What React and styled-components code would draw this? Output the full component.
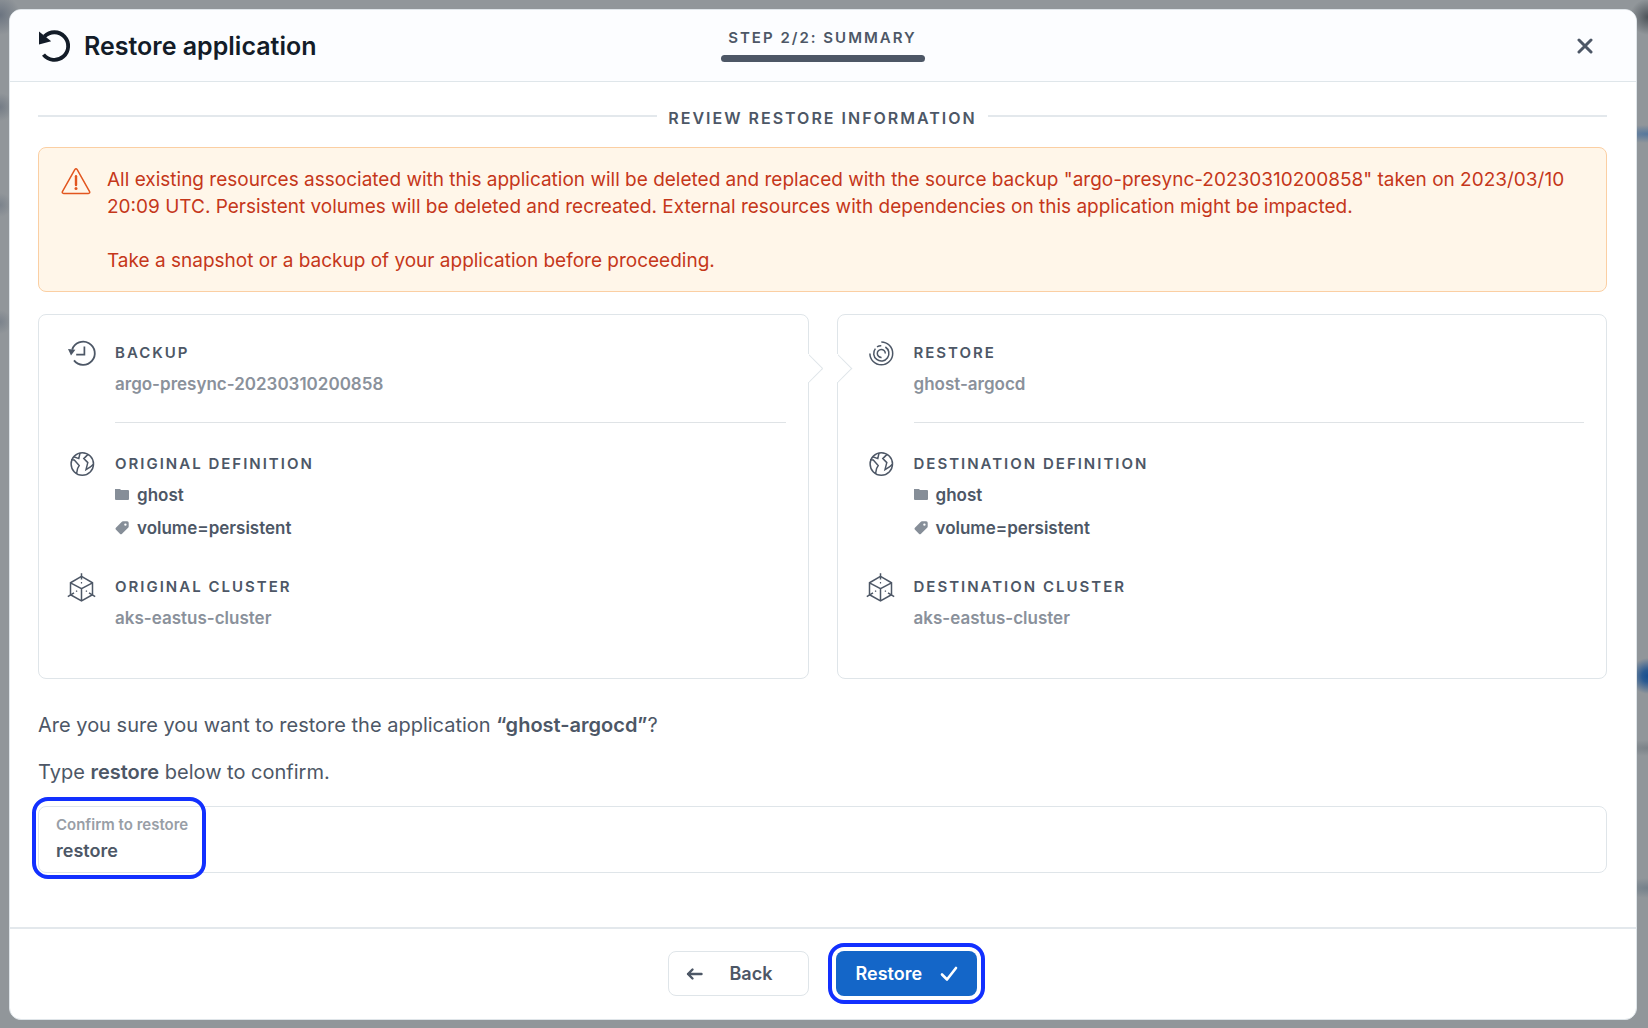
import React, {useState} from 'react';
import styled, {createGlobalStyle} from "styled-components";

const GlobalStyle = createGlobalStyle`
  *, *::before, *::after {
    box-sizing: border-box;
  }

  body {
    margin: 0;
    color: #4d5766;
    font-family: Inter, "Liberation Sans", sans-serif;
    font-size: 20px;
    line-height: 26px;
  }

  h1, h2, h3, p {
    margin: 0;
  }
`;

const Backdrop = styled.div`
  display: flex;
  min-height: 100vh;
  padding: 9px 11px 9px 9px;
  background:
    radial-gradient(circle at 0 15px, #6b7480 0, transparent 20px),
    radial-gradient(circle at 0 107px, #747c86 0, transparent 14px),
    radial-gradient(circle at 0 205px, #7b838c 0, transparent 12px),
    radial-gradient(circle at 0 322px, #7b838c 0, transparent 12px),
    radial-gradient(circle at 100% 17px, #4d5359 0, transparent 18px),
    radial-gradient(ellipse 40px 9px at 100% 134px, #56779c 0, transparent 100%),
    radial-gradient(circle at 100% 676px, #164f90 0, #2a5a92 6px, transparent 18px),
    radial-gradient(ellipse 30px 8px at 100% 748px, #7b8288 0, transparent 100%),
    radial-gradient(ellipse 30px 10px at 100% 888px, #74808a 0, transparent 100%),
    #91969a;
`;

const Modal = styled.main`
  display: flex;
  flex: 1;
  flex-direction: column;
  min-width: 0;
  overflow: hidden;
  background: #fff;
  border: 1px solid #dfe5e9;
  border-radius: 12px;
`;

const Header = styled.header`
  display: grid;
  grid-template-columns: 1fr auto 1fr;
  align-items: center;
  height: 72px;
  padding: 0 29px 0 28px;
  background: #fcfdff;
  border-bottom: 1px solid #dfe6ea;
`;

const Title = styled.h1`
  display: flex;
  align-items: center;
  gap: 9px;
  color: #131c28;
  font-size: 25px;
  font-weight: 600;
  line-height: 36px;
`;

const Step = styled.div`
  width: 204px;
  padding-bottom: 2px;
  font-size: 15px;
  font-weight: 600;
  line-height: 20px;
  letter-spacing: 2px;
  text-align: center;
  text-transform: uppercase;

  &::after {
    display: block;
    height: 7px;
    margin-top: 7px;
    background: #4d5766;
    border-radius: 4px;
    content: "";
  }
`;

const CloseButton = styled.button`
  display: flex;
  align-items: center;
  justify-content: center;
  justify-self: end;
  width: 44px;
  height: 44px;
  padding: 0;
  color: #4d5766;
  background: none;
  border: 0;
  cursor: pointer;
`;

const Body = styled.div`
  flex: 1;
  padding: 24px 29px 54px 28px;
`;

const Heading = styled.h2`
  display: flex;
  align-items: center;
  gap: 11px;
  margin-bottom: 17px;
  font-size: 16px;
  font-weight: 600;
  line-height: 24px;
  letter-spacing: 2px;
  text-transform: uppercase;

  &::before, &::after {
    flex: 1;
    height: 2px;
    margin-bottom: 4px;
    background: #e3e8ec;
    content: "";
  }
`;

const Alert = styled.div`
  display: flex;
  gap: 16px;
  margin-bottom: 22px;
  padding: 18px 22px 17px;
  color: #c5371a;
  font-size: 19px;
  line-height: 27px;
  background: #fff6e9;
  border: 1px solid #fbcfa3;
  border-radius: 8px;

  svg {
    flex: none;
    margin-top: 1px;
  }

  p + p {
    margin-top: 27px;
  }
`;

const Cards = styled.div`
  display: grid;
  grid-template-columns: 1fr 1fr;
  gap: 28px;
  margin-bottom: 33px;
`;

const Card = styled.section`
  position: relative;
  padding: 26px 22px 48px 27px;
  border: 1px solid #dfe5e9;
  border-radius: 8px;

  /* pointer on the edge that leads from one card to the next */
  &::before {
    position: absolute;
    top: 43px;
    ${({$side}) => $side}: -11px;
    width: 21px;
    height: 21px;
    background: linear-gradient(45deg, transparent 45%, #fff 45%);
    border: 1px solid #dfe5e9;
    border-bottom-color: transparent;
    border-left-color: transparent;
    transform: rotate(45deg);
    content: "";
  }

  &::after {
    position: absolute;
    top: 39px;
    ${({$side}) => $side}: -1px;
    width: 1px;
    height: 28px;
    background: #fff;
    content: "";
  }
`;

const Item = styled.div`
  display: flex;
  gap: 17px;

  & + & {
    margin-top: 35px;
  }
`;

const ItemIcon = styled.svg`
  flex: none;
  width: 32px;
  height: 32px;
  margin-top: -4px;
  fill: none;
  stroke: #4d5766;
  stroke-width: 1.5;
`;

const ItemBody = styled.div`
  flex: 1;
  min-width: 0;
  padding-bottom: ${({$divided}) => $divided ? '26px' : '0'};
  margin-bottom: ${({$divided}) => $divided ? '-6px' : '0'};
  border-bottom: ${({$divided}) => $divided ? '1px solid #dfe3e6' : '0'};
`;

const ItemTitle = styled.h3`
  margin-bottom: 7px;
  font-size: 15px;
  font-weight: 600;
  line-height: 24px;
  letter-spacing: 2px;
  text-transform: uppercase;
`;

const ItemValue = styled.p`
  color: #8a919b;
  font-size: 17px;
  font-weight: 600;
  line-height: 24px;
`;

const Tag = styled.p`
  display: flex;
  align-items: center;
  gap: 8px;
  font-size: 17px;
  font-weight: 600;
  line-height: 24px;

  & + & {
    margin-top: 9px;
  }

  svg {
    width: 14px;
    height: 14px;
    fill: #868e98;
  }
`;

const Question = styled.p`
  margin-bottom: 21px;

  b {
    font-weight: 600;
  }
`;

const Field = styled.div`
  position: relative;
  display: flex;
  flex-direction: column;
  padding: 6px 17px 7px;
  border: 1px solid #dfe5e9;
  border-radius: 8px;

  label {
    color: #989ea6;
    font-size: 15px;
    font-weight: 600;
    line-height: 24px;
  }

  input {
    height: 28px;
    padding: 0;
    color: #4d5766;
    font: 600 18px/28px Inter, "Liberation Sans", sans-serif;
    background: none;
    border: 0;
    outline: 0;
  }
`;

const Callout = styled.span`
  position: absolute;
  top: -10px;
  left: -7px;
  width: 174px;
  height: 82px;
  border: 4px solid #1230ff;
  border-radius: 16px;
  pointer-events: none;
`;

const Footer = styled.footer`
  display: flex;
  justify-content: center;
  gap: 27px;
  padding: 22px 30px 23px 28px;
  border-top: 2px solid #e3e8ec;
`;

const Button = styled.button`
  display: flex;
  align-items: center;
  justify-content: ${({$primary}) => $primary ? 'space-between' : 'flex-start'};
  gap: ${({$primary}) => $primary ? '16px' : '27px'};
  width: 141px;
  height: 45px;
  padding: ${({$primary}) => $primary ? '0 19px 0 20px' : '0 17px'};
  color: ${({$primary}) => $primary ? '#fff' : '#4d5766'};
  font: 600 18px/24px Inter, "Liberation Sans", sans-serif;
  background: ${({$primary}) => $primary ? '#1466c8' : '#fff'};
  border: ${({$primary}) => $primary ? '0' : '1px solid #dfe5e9'};
  border-radius: 8px;
  outline: ${({$primary}) => $primary ? '4px solid #1230ff' : '0'};
  outline-offset: 4px;
  cursor: pointer;
`;

const RestoreIcon = () => (
    <svg width="37" height="36" viewBox="0 0 37 36" fill="none">
        <path d="M5.5 26.6A13.8 13.8 0 1 0 6.5 8.4" stroke="#131c28" strokeWidth="3.8"/>
        <path d="M1 3.5V16.5L13.2 13.2Z" fill="#131c28"/>
    </svg>
);

const WarningIcon = () => (
    <svg width="30" height="30" viewBox="0 0 30 30" fill="none" stroke="#e2561f" strokeLinejoin="round">
        <path d="M13.8 2.6Q15 .8 16.2 2.6L28.6 24.6Q29.2 26.4 27.4 26.4H2.6Q.8 26.4 1.4 24.6Z" strokeWidth="1.5"/>
        <path d="M15 9.2V18" strokeWidth="2.4" strokeLinecap="round"/>
        <circle cx="15" cy="21.6" r="1.5" fill="#e2561f" stroke="none"/>
    </svg>
);

const BackupIcon = () => (
    <ItemIcon viewBox="0 0 32 32">
        <path d="M8 23.4A11.6 11.6 0 1 0 6.2 12.6" strokeWidth="1.8"/>
        <path d="M2 12L9.4 12.8L5 18.4Z" fill="#4d5766" stroke="none"/>
        <path d="M18.4 9.6V17.6H10.2" strokeWidth="1.7"/>
    </ItemIcon>
);

const SpiralIcon = () => (
    <ItemIcon viewBox="0 0 32 32">
        <path d="M16.3 5A11.4 11.4 0 1 1 4.9 16.4"/>
        <path d="M20.4 10A7.6 7.6 0 1 1 10.4 11.6"/>
        <path d="M12 9.8Q14 8.7 16.3 8.8"/>
        <path d="M20.3 16.4A4 4 0 1 0 16.6 20.4"/>
    </ItemIcon>
);

const GlobeIcon = () => (
    <ItemIcon viewBox="0 0 32 32">
        <circle cx="16.3" cy="16" r="11.2"/>
        <path d="M5 11.8L8.3 12L13.2 17.6L11.6 20.4L10.6 25.4M7.8 8.8L12.8 10.6L14 5.2M22 6.4L17.8 10.6L21.8 14.6L20 21.6L24.4 19L27.3 16.4"/>
    </ItemIcon>
);

const ClusterIcon = () => (
    <ItemIcon viewBox="0 0 32 32">
        <path d="M15.5 5.4L26.5 11.8V23.7L15.5 29.9L4.5 23.7V11.8ZM4.5 11.8L15.5 17.7L26.5 11.8M15.5 17.7V29.9"/>
        <path d="M15.5 2.2V8.6M1.8 25.6L8 21.8M29.2 25.6L23 21.8"/>
        <path d="M15.5 11V12.4M10 20.6L11.2 19.8M21 20.6L19.8 19.8" strokeWidth="1.2"/>
    </ItemIcon>
);

const FolderIcon = () => (
    <svg viewBox="0 0 14 14">
        <path d="M0 1H5L6 2H13Q14 2 14 3V11Q14 12 13 12H1Q0 12 0 11Z"/>
    </svg>
);

const LabelIcon = () => (
    <svg viewBox="0 0 14 14">
        <path fillRule="evenodd" d="M6.6 .9Q7.2 .3 8 .3H12Q13.8 .2 13.7 2V5.4Q13.7 6.2 13.1 6.8L6.8 12.9Q5.8 13.6 4.9 12.7L.8 8.6Q0 7.7 .9 6.8ZM10.4 2.4A1.2 1.2 0 1 0 10.4 4.8A1.2 1.2 0 1 0 10.4 2.4Z"/>
    </svg>
);

const details = [
    {
        side: "right",
        icon: <BackupIcon/>,
        title: "Backup",
        name: "argo-presync-20230310200858",
        prefix: "Original",
    },
    {
        side: "left",
        icon: <SpiralIcon/>,
        title: "Restore",
        name: "ghost-argocd",
        prefix: "Destination",
    },
];

const App = () => {
    const [confirmation, setConfirmation] = useState("restore");

    return (
        <Backdrop>
            <GlobalStyle/>
            <Modal>
                <Header>
                    <Title><RestoreIcon/>Restore application</Title>
                    <Step>Step 2/2: Summary</Step>
                    <CloseButton type="button" aria-label="Close">
                        <svg width="16" height="16" viewBox="0 0 16 16" stroke="currentColor" strokeWidth="3" strokeLinecap="round">
                            <path d="M2 2L14 14M14 2L2 14"/>
                        </svg>
                    </CloseButton>
                </Header>
                <Body>
                    <Heading>Review restore information</Heading>
                    <Alert>
                        <WarningIcon/>
                        <div>
                            <p>
                                All existing resources associated with this application will be deleted and replaced
                                with the source backup "argo-presync-20230310200858" taken on 2023/03/10 20:09 UTC.
                                Persistent volumes will be deleted and recreated. External resources with dependencies
                                on this application might be impacted.
                            </p>
                            <p>Take a snapshot or a backup of your application before proceeding.</p>
                        </div>
                    </Alert>
                    <Cards>
                        {details.map(({side, icon, title, name, prefix}) => (
                            <Card key={title} $side={side}>
                                <Item>
                                    {icon}
                                    <ItemBody $divided>
                                        <ItemTitle>{title}</ItemTitle>
                                        <ItemValue>{name}</ItemValue>
                                    </ItemBody>
                                </Item>
                                <Item>
                                    <GlobeIcon/>
                                    <ItemBody>
                                        <ItemTitle>{prefix} definition</ItemTitle>
                                        <Tag><FolderIcon/>ghost</Tag>
                                        <Tag><LabelIcon/>volume=persistent</Tag>
                                    </ItemBody>
                                </Item>
                                <Item>
                                    <ClusterIcon/>
                                    <ItemBody>
                                        <ItemTitle>{prefix} cluster</ItemTitle>
                                        <ItemValue>aks-eastus-cluster</ItemValue>
                                    </ItemBody>
                                </Item>
                            </Card>
                        ))}
                    </Cards>
                    <Question>Are you sure you want to restore the application <b>“ghost-argocd”</b>?</Question>
                    <Question>Type <b>restore</b> below to confirm.</Question>
                    <Field>
                        <label htmlFor="confirmation">Confirm to restore</label>
                        <input
                            id="confirmation"
                            type="text"
                            value={confirmation}
                            onChange={(e) => setConfirmation(e.target.value)}
                        />
                        <Callout/>
                    </Field>
                </Body>
                <Footer>
                    <Button type="button">
                        <svg width="17" height="14" viewBox="0 0 17 14" fill="none" stroke="currentColor" strokeWidth="2.4" strokeLinecap="round" strokeLinejoin="round">
                            <path d="M15.5 7H2M6.5 2.5L2 7L6.5 11.5"/>
                        </svg>
                        Back
                    </Button>
                    <Button type="button" $primary>
                        Restore
                        <svg width="18" height="16" viewBox="0 0 18 16" fill="none" stroke="currentColor" strokeWidth="2.6" strokeLinecap="round" strokeLinejoin="round">
                            <path d="M2 8.5L7 13.5L16 2"/>
                        </svg>
                    </Button>
                </Footer>
            </Modal>
        </Backdrop>
    );
};

export default App;
